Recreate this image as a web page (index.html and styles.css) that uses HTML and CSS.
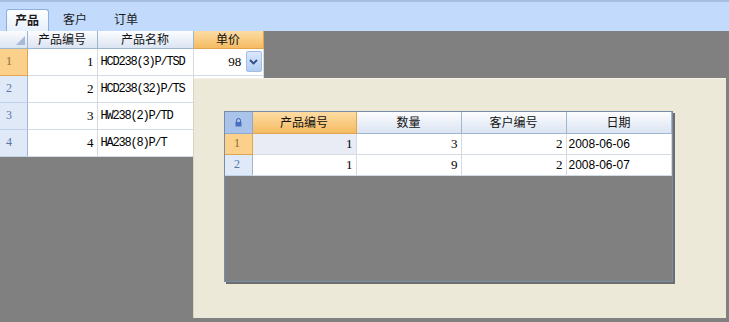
FILE: index.html
```html
<!DOCTYPE html>
<html lang="zh-CN">
<head>
    <meta charset="UTF-8">
    <title>产品</title>
    <link rel="stylesheet" href="styles.css">
</head>
<body>
    <div class="container">
        <!-- 顶部标签 -->
        <div class="tab-bar">
            <div class="tab active">产品</div>
            <div class="tab">客户</div>
            <div class="tab">订单</div>
        </div>

        <!-- 产品表格 -->
        <table class="grid main-grid">
            <colgroup>
                <col style="width: 27px">
                <col style="width: 70px">
                <col style="width: 96px">
                <col style="width: 70px">
            </colgroup>
            <thead>
                <tr>
                    <th class="corner"><span class="corner-mark"></span></th>
                    <th>产品编号</th>
                    <th>产品名称</th>
                    <th class="sel">单价</th>
                </tr>
            </thead>
            <tbody>
                <tr>
                    <td class="row-head sel">1</td>
                    <td class="num">1</td>
                    <td class="code">HCD238(3)P/TSD</td>
                    <td class="num edit">
                        <span class="edit-value">98</span>
                        <span class="drop-btn">
                            <svg width="9" height="6" viewBox="0 0 9 6"><path d="M1 1 L4.5 4.5 L8 1" fill="none" stroke="#2d4f88" stroke-width="1.8"/></svg>
                        </span>
                    </td>
                </tr>
                <tr>
                    <td class="row-head">2</td>
                    <td class="num">2</td>
                    <td class="code">HCD238(32)P/TS</td>
                    <td></td>
                </tr>
                <tr>
                    <td class="row-head">3</td>
                    <td class="num">3</td>
                    <td class="code">HW238(2)P/TD</td>
                    <td></td>
                </tr>
                <tr>
                    <td class="row-head">4</td>
                    <td class="num">4</td>
                    <td class="code">HA238(8)P/T</td>
                    <td></td>
                </tr>
            </tbody>
        </table>

        <!-- 下拉子表 -->
        <div class="popup">
            <div class="sub-grid-box">
                <table class="grid sub-grid">
                    <colgroup>
                        <col style="width: 27px">
                        <col style="width: 104px">
                        <col style="width: 105px">
                        <col style="width: 105px">
                        <col style="width: 105px">
                    </colgroup>
                    <thead>
                        <tr>
                            <th class="lock">
                                <svg width="7" height="9" viewBox="0 0 7 9"><path d="M1.5 4 V2.5 a2 2 0 0 1 4 0 V4" fill="none" stroke="#3a5fb0" stroke-width="1"/><rect x="0.5" y="4" width="6" height="4.5" fill="#4a6fc0"/></svg>
                            </th>
                            <th class="sel">产品编号</th>
                            <th>数量</th>
                            <th>客户编号</th>
                            <th>日期</th>
                        </tr>
                    </thead>
                    <tbody>
                        <tr>
                            <td class="row-head sel">1</td>
                            <td class="num current">1</td>
                            <td class="num">3</td>
                            <td class="num">2</td>
                            <td class="date">2008-06-06</td>
                        </tr>
                        <tr>
                            <td class="row-head">2</td>
                            <td class="num">1</td>
                            <td class="num">9</td>
                            <td class="num">2</td>
                            <td class="date">2008-06-07</td>
                        </tr>
                    </tbody>
                </table>
            </div>
        </div>
    </div>
</body>
</html>
```

FILE: styles.css
```css
* {
    margin: 0;
    padding: 0;
    box-sizing: border-box;
}

body {
    font-family: "Liberation Sans", "Noto Sans CJK SC", sans-serif;
    font-size: 12px;
    background: #808080;
    width: 729px;
    height: 322px;
    overflow: hidden;
}

.container {
    position: relative;
    height: 322px;
}

/* 标签栏 */
.tab-bar {
    height: 31px;
    background: #c2dafc;
    border-top: 2px solid #a6bfe0;
    display: flex;
    align-items: flex-end;
    padding-left: 6px;
}

.tab {
    height: 22px;
    padding: 0 14px 0 13px;
    line-height: 20px;
    color: #1a1a1a;
    font-family: "Noto Sans CJK SC", sans-serif;
    font-size: 12px;
}

.tab.active {
    padding: 0 9px 0 8px;
    margin-right: 1px;
    font-weight: bold;
    background: linear-gradient(#ffffff, #e6effc);
    border: 1px solid #8eb0de;
    border-bottom: none;
    border-radius: 3px 3px 0 0;
}

/* 表格 */
.grid {
    border-collapse: collapse;
    table-layout: fixed;
    background: #ffffff;
}

.grid th {
    font-weight: normal;
    font-family: "Noto Sans CJK SC", sans-serif;
    font-size: 12px;
    color: #111;
    background: linear-gradient(#fbfcfe, #dbe4f2);
    border-right: 1px solid #9eb6ce;
    border-bottom: 1px solid #9eb6ce;
    text-align: center;
    padding: 0;
    line-height: 14px;
}

.grid th.sel {
    background: linear-gradient(#fcdca4, #f5bb62);
    border-color: #e0a64e;
}

.grid td {
    border-right: 1px solid #d5dbe5;
    border-bottom: 1px solid #d5dbe5;
    padding: 0 3px;
    color: #000;
    white-space: nowrap;
    overflow: hidden;
}

.grid td.row-head {
    background: #dfe9f7;
    color: #5a77a8;
    border-right: 1px solid #9eb6ce;
    border-bottom: 1px solid #c2d2e6;
    font-family: "Liberation Serif", serif;
    font-size: 12px;
    padding: 0 0 0 6px;
}

.grid td.row-head.sel {
    background: #fbd08a;
    color: #8a6a3a;
    border-color: #e0a64e;
}

.grid td.num {
    text-align: right;
    font-family: "Liberation Serif", serif;
    font-size: 13px;
}

.main-grid {
    width: 263px;
}

.main-grid thead th {
    height: 17px;
}

.main-grid td {
    height: 27px;
}

.corner-mark {
    display: block;
    width: 0;
    height: 0;
    margin: 2px 2px 0 auto;
    border-left: 9px solid transparent;
    border-bottom: 9px solid #a8bad6;
}

.main-grid td.code {
    font-family: "Liberation Mono", monospace;
    font-size: 12px;
    letter-spacing: -1.2px;
    padding-left: 3px;
}

.main-grid td.edit {
    padding: 0 1px 0 3px;
}

.edit-value {
    vertical-align: middle;
}

.drop-btn {
    display: inline-flex;
    align-items: center;
    justify-content: center;
    width: 16px;
    height: 21px;
    margin-left: 1px;
    vertical-align: middle;
    background: linear-gradient(#dce8fb, #b3cdf4);
    border: 1px solid #a3bde3;
    border-radius: 2px;
}

/* 弹出子表 */
.popup {
    position: absolute;
    left: 193px;
    top: 78px;
    width: 533px;
    height: 240px;
    background: #ece9d8;
    border-left: 1px solid #d8d4c2;
    border-top: 1px solid #f6f4ea;
    padding: 32px 0 0 30px;
}

.sub-grid-box {
    width: 449px;
    height: 171px;
    background: #808080;
    border: 1px solid #7b8ca6;
    box-shadow: 2px 2px 0 #6d6d6d;
}

.sub-grid {
    width: 446px;
}

.sub-grid thead th {
    height: 21px;
}

.sub-grid th.lock {
    background: #a9c3ea;
    border-color: #8fa9cf;
}

.sub-grid td {
    height: 21px;
}

.sub-grid td.row-head {
    padding-left: 9px;
}

.sub-grid td.current {
    background: #e9ebf5;
}

.sub-grid td.date {
    font-family: "Liberation Sans", sans-serif;
    font-size: 12px;
    padding-left: 2px;
}
```
